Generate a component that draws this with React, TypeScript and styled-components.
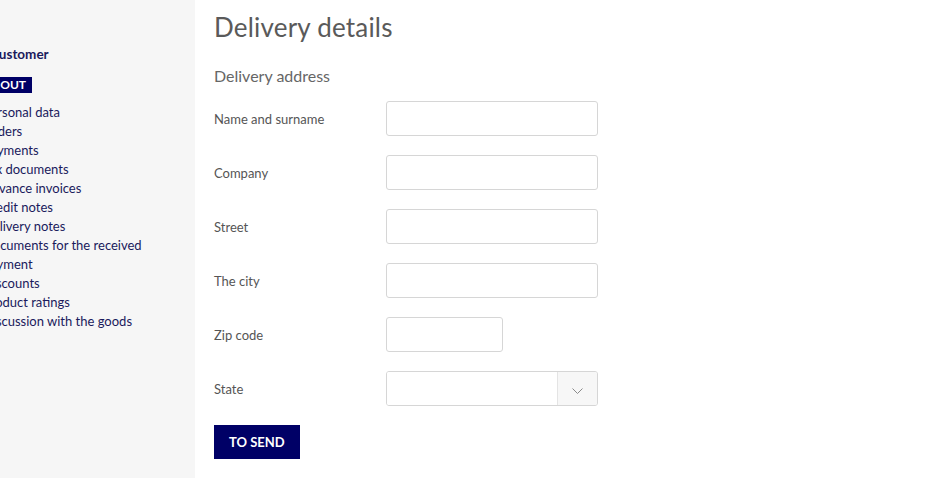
import styled, { createGlobalStyle } from "styled-components";

const GlobalStyle = createGlobalStyle`
  html, body {
    margin: 0;
    padding: 0;
    background: #ffffff;
  }
  body {
    font-family: Lato, "Open Sans", sans-serif;
  }
`;

const Page = styled.div`
  display: flex;
  width: 940px;
  height: 478px;
  overflow: hidden;
`;

const Sidebar = styled.aside`
  flex-shrink: 0;
  width: 195px;
  height: 100%;
  background: #f6f6f6;
  overflow: hidden;
`;

const SideInner = styled.div`
  display: flex;
  flex-direction: column;
  align-items: flex-start;
  margin-left: -17px;
  padding-top: 45px;
  width: 240px;
  color: #1a1a5c;
`;

const SideTitle = styled.div`
  margin-left: 7px;
  font-size: 13.5px;
  font-weight: 700;
  line-height: 18px;
  white-space: nowrap;
`;

const LogoutButton = styled.button`
  margin: 14px 0 0 -16px;
  height: 16px;
  padding: 0 6px;
  border: none;
  background: #000066;
  color: #ffffff;
  font-family: Lato, sans-serif;
  font-size: 12px;
  font-weight: 700;
  line-height: 16px;
  white-space: nowrap;
`;

const NavList = styled.ul`
  list-style: none;
  margin: 10px 0 0;
  padding: 0;
  width: 175px;
`;

const NavItem = styled.li`
  font-size: 13px;
  line-height: 19px;
  color: #1a1a5c;
`;

const Main = styled.main`
  flex: 1;
  padding: 9px 0 0 19px;
  color: #555555;
`;

const Title = styled.h1`
  margin: 0;
  font-size: 26px;
  font-weight: 400;
  line-height: 36px;
  color: #5a5a5a;
  letter-spacing: 0.2px;
`;

const Subtitle = styled.h2`
  margin: 20px 0 0;
  font-size: 16px;
  font-weight: 400;
  line-height: 22px;
  color: #666666;
`;

const Form = styled.form`
  display: flex;
  flex-direction: column;
  gap: 19px;
  margin-top: 14px;
`;

const Row = styled.div`
  display: grid;
  grid-template-columns: 172px auto;
  align-items: center;
`;

const Label = styled.label`
  font-size: 13px;
  color: #555555;
`;

const Input = styled.input<{ $width?: number }>`
  box-sizing: border-box;
  width: ${({ $width }) => $width ?? 212}px;
  height: 35px;
  border: 1px solid #d6d6d6;
  border-radius: 3px;
  background: #ffffff;
  padding: 0 10px;
  font-family: Lato, sans-serif;
  font-size: 13px;
  outline: none;
`;

const SelectBox = styled.div`
  box-sizing: border-box;
  display: flex;
  width: 212px;
  height: 35px;
  border: 1px solid #d6d6d6;
  border-radius: 3px;
  overflow: hidden;
`;

const SelectValue = styled.div`
  flex: 1;
  background: #ffffff;
`;

const SelectArrow = styled.div`
  display: flex;
  align-items: center;
  justify-content: center;
  width: 39px;
  border-left: 1px solid #e4e4e4;
  background: #f7f7f7;
  padding-top: 4px;
`;

const SubmitButton = styled.button`
  align-self: flex-start;
  height: 34px;
  padding: 0 15px;
  border: none;
  background: #000066;
  color: #ffffff;
  font-family: Lato, sans-serif;
  font-size: 13px;
  font-weight: 700;
`;

const navItems = [
  "Personal data",
  "Orders",
  "Payments",
  "Tax documents",
  "Advance invoices",
  "Credit notes",
  "Delivery notes",
  "Documents for the received payment",
  "Discounts",
  "Product ratings",
  "Discussion with the goods",
];

const fields = [
  { label: "Name and surname" },
  { label: "Company" },
  { label: "Street" },
  { label: "The city" },
  { label: "Zip code", width: 117 },
];

export default function App() {
  return (
    <>
      <GlobalStyle />
      <Page>
        <Sidebar>
          <SideInner>
            <SideTitle>Customer</SideTitle>
            <LogoutButton>LOG OUT</LogoutButton>
            <NavList>
              {navItems.map((item) => (
                <NavItem key={item}>{item}</NavItem>
              ))}
            </NavList>
          </SideInner>
        </Sidebar>
        <Main>
          <Title>Delivery details</Title>
          <Subtitle>Delivery address</Subtitle>
          <Form onSubmit={(e) => e.preventDefault()}>
            {fields.map((f) => (
              <Row key={f.label}>
                <Label>{f.label}</Label>
                <Input $width={f.width} />
              </Row>
            ))}
            <Row>
              <Label>State</Label>
              <SelectBox>
                <SelectValue />
                <SelectArrow>
                  <svg width="11" height="6" viewBox="0 0 11 6">
                    <path d="M0.5 0.5 L5.5 5.5 L10.5 0.5" fill="none" stroke="#8a8a8a" strokeWidth="1" />
                  </svg>
                </SelectArrow>
              </SelectBox>
            </Row>
            <SubmitButton type="submit">TO SEND</SubmitButton>
          </Form>
        </Main>
      </Page>
    </>
  );
}
